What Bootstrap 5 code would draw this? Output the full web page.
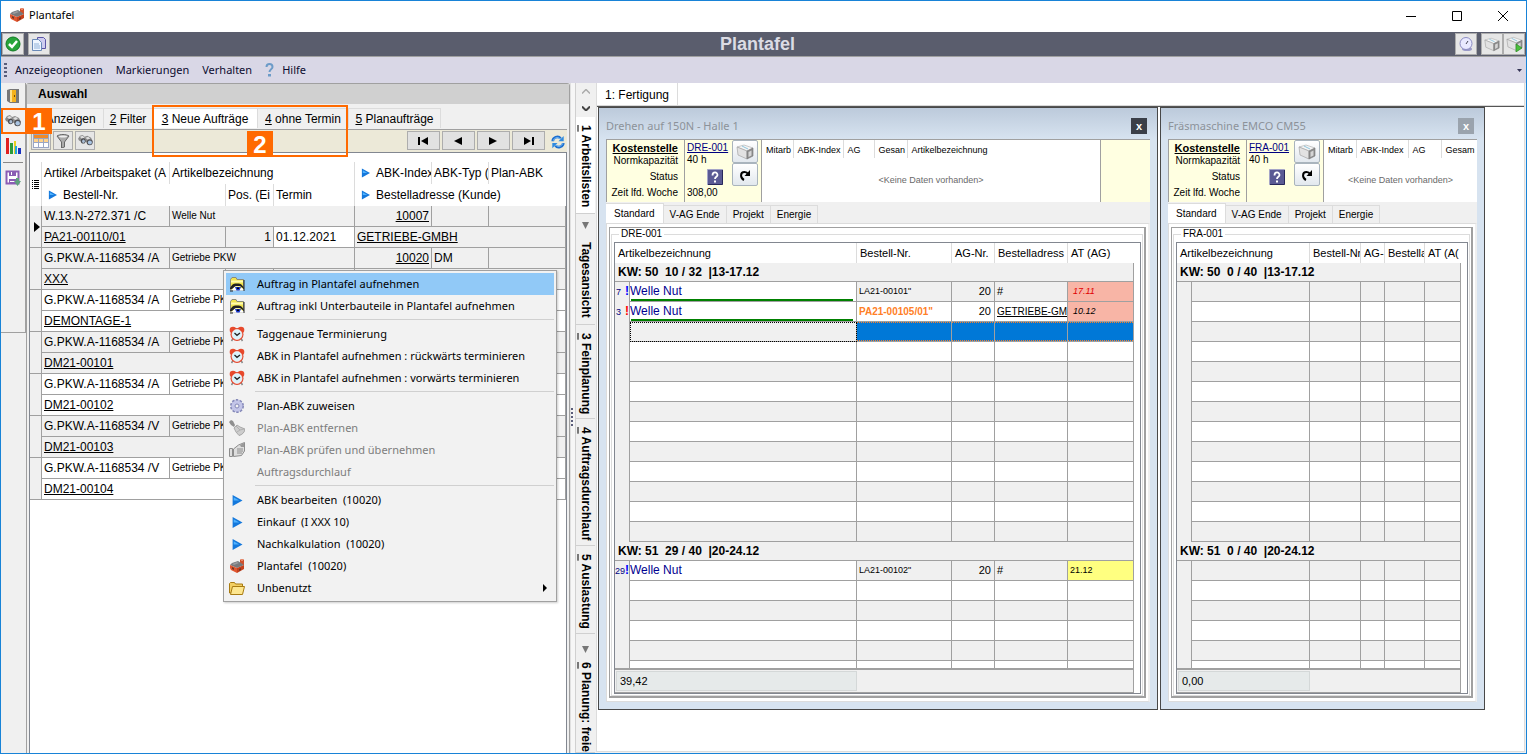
<!DOCTYPE html>
<html lang="de">
<head>
<meta charset="utf-8">
<meta name="viewport" content="width=device-width, initial-scale=1">
<title>Plantafel</title>
<link rel="stylesheet" href="https://cdn.jsdelivr.net/npm/bootstrap@5.3.0/dist/css/bootstrap.min.css">
<style>
:root{--ui:"Noto Sans","Segoe UI",sans-serif;--grid:"Liberation Sans",Arial,sans-serif;--line:#a0a0a0;--face:#f0f0f0;--mark:#ff6a00}
body{font:12px/16px var(--grid);color:#000;background:#fff}
button{font:inherit;color:inherit;padding:0;border:0;background:none}
a{color:inherit}
svg{display:block;flex:none}
.ui{font-family:var(--ui);font-size:11px}
.app{height:100vh;border:1px solid #1883d7;overflow:hidden;position:relative}
.titlebar,.banner,.menubar{flex:none}
.titlebar{height:31px;padding-left:8px}
.titlebar button{width:46px;height:29px;display:grid;place-items:center}
.banner{height:25px;background:#5a5d6d;border-bottom:1px solid var(--line);padding:0 1px}
.banner h1{font-size:18px;line-height:24px;font-weight:bold;color:#dcdce4;padding-left:10px}
.tool{width:22px;height:22px;background:#e6e6e6;border:1px solid #adadad;display:grid;place-items:center}
.menubar{height:26px;background:#d9d7e6;color:#0c0c30;padding-left:3px}
.menubar a{text-decoration:none;margin-left:13px}
.grip{width:3px;height:14px;background:repeating-linear-gradient(#5a5d7a 0 2px,transparent 2px 4px)}
.work{min-height:0;background:var(--face)}
.rail{width:25px;height:250px;border:solid var(--line);border-width:0 1px 1px 0}
.rail button{height:25px;width:24px;display:grid;place-items:center}
.rail hr{margin:4px 2px 2px;border-top:1px solid #888;opacity:1}
.selection{width:544px;flex:none;border:solid var(--line);border-width:1px 1px 0 1px;border-radius:3px 3px 0 0;position:relative;padding:0 2px}
.selection h2{font-size:12px;line-height:20px;font-weight:bold;background:#d0d0d0;margin:0 -2px 4px;padding-left:11px}
.seltabs{height:21px}
.seltabs button{height:20px;border:1px solid #dcdcdc;border-width:1px 1px 0 0;white-space:nowrap;text-align:center}
.seltabs .on{background:#fff}
.seltools{height:23px;background:#ece9d8;border-top:1px solid #a0a0a0;padding:1px 2px 0 2px;gap:2px}
.seltools .tool{width:20px;height:19px}
.seltools .nav-b{width:33px;background:#e1e1e1}
.listbox{background:#fff;border:solid #828790;border-width:1px 1px 0 1px;padding-top:9px;min-height:0}
.list{width:536px;table-layout:fixed;border-collapse:separate;border-spacing:0}
.list th,.list td{height:21px;line-height:18px;padding:0 2px;border:solid var(--line);border-width:0 1px 1px 0;white-space:nowrap;overflow:hidden;font-weight:normal}
.list th{height:22px;border-color:#dcdcdc;border-bottom:0}
.list th:last-child{border-right:0}
.list .g,.list th.g{background:var(--face);padding:0}
.list th.g{background:#fff}
.list tr.alt td{background:var(--face)}
.list tr.alt td.w{background:#fff}
.list .sm{font-size:10px}
.list th svg{display:inline-block;margin:0 6px 0 4px;vertical-align:-1px}
.num{text-align:right}
.split{width:5px;border-left:1px solid #e0e0e0;background:#f6f6f6;display:flex;align-items:center}
.vtabs{width:20px;border-left:1px solid #d0d0d0;overflow:hidden;margin-right:1px}
.vtabs button{writing-mode:vertical-rl;font-weight:bold;width:19px;flex:none;border-bottom:1px solid #d0d0d0;padding:8px 0 4px;white-space:nowrap;display:flex;align-items:center;justify-content:flex-start;gap:13px;line-height:18px}
.vtabs button:last-child{gap:9px;padding-bottom:0}
.vtabs button.roomy{padding-bottom:6px}
.vtabs button.on{background:#fff;padding-bottom:6px}
.vtabs button.step{padding:0;border:0;justify-content:center;height:17px}
.desk{min-width:0;background:#fff;border:solid #dcdcdc;border-width:0 1px 1px 1px;margin:0 1px 1px 0}
.desktabs{height:23px;border-bottom:1px solid #d8d8d8}
.desktabs button{padding:2px 8px 0;border-right:1px solid #dcdcdc}
.mdi{border-top:1px solid #555;padding:0 0 0 1px;gap:2px}
.win{border:1px solid #484848;background:linear-gradient(#bccadb,#d7e3f0 31px);padding:0 7px 7px;flex:none;font-size:11px}
.win-a{width:560px}.win-b{width:325px}
.win header{height:31px;font-family:var(--ui);color:#8c9299;padding-top:5px;margin-right:3px}
.win header button{width:16px;height:16px;color:#fff;background:#9aa3ad;font:bold 11px/14px var(--grid)}
.win-a header button{background:#3b3f48}
.info{height:63px;background:#ffffe1;border-top:1px solid var(--line);overflow:hidden}
.facts,.vals,.btns{flex:none;white-space:nowrap}
.facts{width:79px;font-size:10px;line-height:12px;padding:2px 6px 0 0;text-align:right;border-right:1px solid var(--line);border-left:1px solid var(--line)}
.facts b{font-size:11px}
.vals{width:47px;font-size:10px;line-height:12px;padding:2px 0 0 2px}
.vals svg{margin:3px 9px 2px auto}
.vals a{color:#000080}
.btns{width:29px}
.btns button{width:26px;height:23px;border:1px solid #a9b4bd;border-radius:2px;background:linear-gradient(#fff,#e2e8ee);display:grid;place-items:center}
.mini{background:#fff;border:solid var(--line);border-width:0 1px;font-size:9px;overflow:hidden}
.mini-a{width:340px}
.mini table{table-layout:fixed;width:100%}
.mini th{font-weight:normal;height:18px;padding:2px 0 0 4px;border-right:1px solid #dcdcdc;white-space:nowrap;overflow:hidden}
.mini th:last-child{border:0}
.mini td{text-align:center;color:#6a6a6a;padding-top:14px}
.wtabs{background:var(--face);height:21px;font-size:10px}
.wtabs button{height:18px;border:solid #dcdcdc;border-width:1px 1px 0 0;padding:0 6px;line-height:15px}
.wtabs .on{height:20px;background:#fff;padding:0 8px}
.page{background:#fff;border:1px solid #dcdcdc;border-right:2px solid #efefef;padding:3px 2px}
.box3d{border:1px solid var(--line);border-right-width:2px;border-bottom-width:2px;padding:0 1px}
.box3d fieldset{border:1px solid #dcdcdc;padding:3px 1px 1px 2px;margin:0;min-width:0}
.box3d legend{float:none;width:auto;font-size:10px;line-height:12px;margin:2px 0 -1px 5px;padding:0 2px}
.gridbox{border:1px solid #828790;padding-right:6px;background:#fff}
.plan{width:100%;table-layout:fixed;border-collapse:separate;border-spacing:0}
.plan th,.plan td{height:20px;line-height:17px;padding:0 3px 0 2px;border:solid var(--line);border-width:0 1px 1px 0;white-space:nowrap;overflow:hidden;font-weight:normal}
.plan thead th{border-color:#dcdcdc;border-bottom:0;padding:0 0 0 3px}
.plan thead th:last-child{border-right:0}
.plan .wk td{height:19px;font-weight:bold;font-size:12px;padding-left:3px;white-space:pre;background:var(--face)}
.plan td.g{border-bottom:0;background:var(--face);padding:0 0 0 1px;font-size:9px;color:#000080}
.plan tr.alt td{background:var(--face)}
.plan td.name,.plan tr.alt td.name{background:#fff;color:#000090;font-size:12px;padding-left:0}
.plan td.bar{background:linear-gradient(green,green) 1px 100%/222px 2px no-repeat #fff!important}
.plan .t9{font-size:9px}
.plan .late{background:#f8b5a6!important;font-size:9px;font-style:italic;padding-left:5px}
.plan .red{color:#e00000}
.plan .hit{color:#ff7f27;font-size:10px}
.plan .firm{font-size:10px;padding-right:0}
.plan .soon{background:#ffff80!important;font-size:9px}
.plan tr.sel td{background:repeating-linear-gradient(90deg,#ff7f27 0 1px,transparent 1px 2px) 0 0/100% 1px no-repeat,repeating-linear-gradient(90deg,#ff7f27 0 1px,transparent 1px 2px) 0 100%/100% 1px no-repeat #0078d7}
.plan tr.sel td.g{border-bottom:0;background:var(--face)}
.plan tr.sel td.first{background:var(--face);outline:1px dotted #000;outline-offset:-1px}
.plan tr.part td{height:7px;border-bottom:0;line-height:6px}
.plan tfoot td{height:25px;background:var(--face)!important;border-top:2px solid var(--line);padding:1px 0 1px 1px}
.sum{display:block;height:20px;line-height:18px;background:#e6eaea;border:1px solid #d4d8d8;padding-left:3px}
.excl{font:bold 12px/14px var(--grid);color:#00f}
.excl-r{color:red}
.ctx{position:absolute;left:222px;top:269px;width:334px;background:#f2f2f2;border:1px solid var(--line);box-shadow:1px 1px 2px #0003;padding:2px;z-index:5}
.ctx button{display:flex;align-items:center;height:22px;width:100%;padding:0 7px 0 3px;text-align:left;white-space:pre}
.ctx button span{margin-left:12px}
.ctx .hot{background:#91c9f7}
.ctx button:disabled{color:#7d7d7d}
.ctx hr{margin:2px 0 3px 29px;border-top:1px solid #d0d0d0;opacity:1}
.callout{position:absolute;border:2px solid var(--mark);z-index:6;pointer-events:none}
.callout b{position:absolute;width:26px;height:26px;background:var(--mark);color:#fff;font:bold 24px/27px var(--grid);text-align:center}
.c-one{left:0;top:107px;width:26px;height:26px}.c-one b{left:23px;top:-2px}
.c-two{left:125px;top:21px;width:196px;height:52px}.c-two b{left:93px;bottom:-2px}
</style>
</head>
<body>
<svg width="0" height="0" class="position-absolute" aria-hidden="true">
<symbol id="factory" viewBox="0 0 16 16"><path d="M11 7V2l1-1h2l1 1v5z" fill="#d0502c"/><path d="M12 1h2v2h-2z" fill="#e88a6a"/><path d="M1 7l2-2 6-2 6 4-7 3z" fill="#77797c"/><path d="M3 6l5-2 2 1-5 2z" fill="#9a9c9e"/><path d="M1 7l7 3v5l-6-3-1-2z" fill="#e0562f"/><path d="M8 10l7-3v4l-7 4z" fill="#c5401c"/><path d="M10 11l2-1v2l-2 1zM3 9l2 1v2l-2-1z" fill="#6b3a2a"/></symbol>
<symbol id="tri" viewBox="0 0 10 10"><path d="M1 0l9 5-9 5z" fill="#1478dc"/><path d="M2 2l5 3H2z" fill="#4fb2ff"/></symbol>
<symbol id="bino" viewBox="0 0 16 14"><path d="M0 5l2-3 3-1 2 2 3-1 4 2 2 4-2 2-5-1-3-1-3 0-2-1z" fill="#8b8b8b"/><path d="M2 3l3-1 2 2-3 1zM8 4l3-1 2 2-3 1z" fill="#dedede"/><ellipse cx="5.500" cy="7.500" rx="2.500" ry="2.800" fill="#4c4c50"/><circle cx="12.500" cy="9" r="3.200" fill="#4c4c50"/><ellipse cx="5.800" cy="7.800" rx="1.500" ry="1.800" fill="#a9bdd4"/><circle cx="12.700" cy="9.200" r="2.200" fill="#a9c4e2"/></symbol>
<symbol id="cube" viewBox="0 0 18 16"><path d="M1 3l7-2 9 3-6 3z" fill="#f4f4f4" stroke="#aaa" stroke-width=".6"/><path d="M1 3l10 4v8L2 11z" fill="#e2e2e2" stroke="#999" stroke-width=".6"/><path d="M11 7l6-3v8l-6 3z" fill="#8d8d8d" stroke="#777" stroke-width=".6"/><path d="M12.500 8l3-1.500v5l-3 1.500z" fill="#d5d5d5"/><path d="M6 2l6 3" stroke="#8cc4dc"/></symbol>
<symbol id="clock" viewBox="0 0 16 16"><path d="M4 12.500l-1.500 2.500M12 12.500l1.500 2.500" stroke="#888" stroke-width="1.500"/><circle cx="4" cy="4" r="3.300" fill="#e84a2c"/><circle cx="12" cy="4" r="3.300" fill="#e84a2c"/><circle cx="8" cy="8.500" r="6.500" fill="#e0442a"/><circle cx="8" cy="8.500" r="5" fill="#d9f2fb" stroke="#fff" stroke-width=".6"/><path d="M5.500 7L8 9.300 11 7" fill="none" stroke="#222" stroke-width="1.300"/></symbol>
<symbol id="see" viewBox="0 0 16 16"><path d="M1.500 14V3.500L3 1.500h4l1 2h6.500V14z" fill="#f1e44e" stroke="#8a8a7a"/><path d="M2 4.500h12v2H2z" fill="#fffbb0"/><path d="M1 12c2-4 4-5 7-4.500C11 7 13 8 15 12v1l-4-3-4 0-4 3H1z" fill="#222"/><path d="M2 14.500l4-4h4l5 3v1z" fill="#fff"/><path d="M6 11h6l-1.500 3.500h-3z" fill="#1735c8"/><path d="M8 11.500h2v1.500H8z" fill="#001"/><path d="M15 4v11M1 15h3" stroke="#222"/></symbol>
<symbol id="gear" viewBox="0 0 16 16"><circle cx="8" cy="8" r="6" fill="#b6b9e0" stroke="#8488b8" stroke-width="2" stroke-dasharray="2.400 1.370"/><circle cx="8" cy="8" r="5.500" fill="#c3c5e8"/><circle cx="8" cy="8" r="2" fill="#f2f2f2" stroke="#8488b8"/></symbol>
<symbol id="brush" viewBox="0 0 16 16"><path d="M0 2l2-2 2 1 2 4-1 2-3-2z" fill="#8f8f8f"/><path d="M5 8l3-3 3 2 5 2c0 3-3 6-6 6.500L7 12z" fill="#cdcdcd" stroke="#9a9a9a" stroke-width=".8"/><path d="M7 6l4 4 4-1M8 12l3-2" fill="none" stroke="#aaa" stroke-width=".8"/></symbol>
<symbol id="hand" viewBox="0 0 16 16"><path d="M.5 6.500h3v8h-3zM4.500 7l5-4 6-2.500V9l-3 4.500-8 1z" fill="#ddd" stroke="#8c8c8c"/><path d="M8 7h6M8 9h6M8 11h5" stroke="#8c8c8c"/><path d="M11 3l4-2v4h-3z" fill="#999"/></symbol>
<symbol id="folder" viewBox="0 0 16 16"><path d="M.5 13V3.500l1-1h4l1 1.500h7v9z" fill="#f3cf63" stroke="#a87b12"/><path d="M1.500 14.500l2-8h12l-2 8z" fill="#fde68f" stroke="#a87b12"/></symbol>
<symbol id="help" viewBox="0 0 16 16"><path d="M.5.500h15v15H.5z" fill="#5a5a94" stroke="#a5a5c8"/><path d="M15.500 1v14.500H1" fill="none" stroke="#28285c"/><path d="M5.500 6.500c0-4 5-4 5-.5 0 2-2.500 1.500-2.500 4" fill="none" stroke="#fff" stroke-width="1.800"/><path d="M7 11.500h2v2H7z" fill="#fff"/></symbol>
<symbol id="redo" viewBox="0 0 14 14"><path d="M6 12C2 10 2 4 6.500 4c2 0 3 1 3.500 2" fill="none" stroke="#000" stroke-width="2"/><path d="M12 2v6H6.500z"/></symbol>
</svg>

<div class="app d-flex flex-column">
 <div class="titlebar d-flex ui">
  <svg width="16" height="16" class="align-self-center mb-1"><use href="#factory"/></svg>
  <span class="align-self-center me-auto ps-1 pb-1">Plantafel</span>
  <button aria-label="Minimieren"><svg width="10" height="10"><path d="M0 5.500h10" stroke="#000"/></svg></button>
  <button aria-label="Maximieren"><svg width="10" height="10"><path d="M.5.500h9v9h-9z" fill="none" stroke="#000"/></svg></button>
  <button aria-label="Schließen"><svg width="10" height="10"><path d="M0 0l10 10M10 0L0 10" stroke="#000"/></svg></button>
 </div>
 <div class="banner d-flex align-items-center">
  <button class="tool me-1" aria-label="OK"><svg width="16" height="16"><circle cx="8" cy="8" r="7" fill="#27a43a" stroke="#0f7a22"/><path d="M4 8l3 3 5-6" fill="none" stroke="#fff" stroke-width="2.500"/></svg></button>
  <button class="tool" aria-label="Kopieren"><svg width="16" height="16"><path d="M6.500 1.500h6l2 2v9h-8z" fill="#cfcdf0" stroke="#5b55a5"/><path d="M1.500 3.500h6l3 3v8h-9z" fill="#eef5ff" stroke="#6a8ab8"/><path d="M3 8h5M3 10h6M3 12h6" stroke="#8fb0d8"/></svg></button>
  <h1 class="flex-grow-1 text-center m-0">Plantafel</h1>
  <button class="tool me-1" aria-label="Zeit"><svg width="16" height="16"><ellipse cx="9" cy="13" rx="5" ry="2" fill="#9a9ac8"/><circle cx="8" cy="7.500" r="6" fill="#e9e9ff" stroke="#8c8cc4"/><path d="M8 8l2-3" stroke="#445"/></svg></button>
  <button class="tool" aria-label="Paket"><svg width="16" height="15"><use href="#cube"/></svg></button>
  <button class="tool" aria-label="Paket starten"><svg width="17" height="16"><use href="#cube"/><path d="M10 8l6 4-6 4z" fill="#4cc03c" stroke="#2a8a20" stroke-width=".7"/></svg></button>
 </div>
 <nav class="menubar d-flex align-items-center ui">
  <span class="grip"></span>
  <a href="#" class="ms-2">Anzeigeoptionen</a><a href="#">Markierungen</a><a href="#">Verhalten</a>
  <a href="#" class="d-flex align-items-center gap-2"><svg width="9" height="14"><path d="M1.500 4c0-4 6-4 6 0 0 2.500-3 2-3 5" fill="none" stroke="#6c9bc8" stroke-width="2"/><path d="M3 11h3v2.500H3z" fill="#6c9bc8"/></svg>Hilfe</a>
  <svg class="ms-auto me-1" width="5" height="3"><path d="M0 0h5L2.500 3z" fill="#335"/></svg>
 </nav>

 <div class="work d-flex flex-grow-1">
  <div class="rail flex-shrink-0">
   <button aria-label="Beenden"><svg width="14" height="16"><path d="M1 2l3-1h9v14H4l-3-2z" fill="#777"/><path d="M4 2h6v12H4z" fill="#f5b21c"/><path d="M4 2h2v12H4z" fill="#ffe08a"/><path d="M8 7h1v2H8z" fill="#7a4a00"/></svg></button>
   <button aria-label="Suchen"><svg width="16" height="14"><use href="#bino"/></svg></button>
   <button aria-label="Diagramm"><svg width="16" height="16"><path d="M1 0h3v16H1z" fill="#e02020"/><path d="M5 5h3v11H5z" fill="#2a9a3a"/><path d="M9 3h2v13H9z" fill="#e8d020"/><path d="M10 8h2v8h-2z" fill="#20a8d8"/><path d="M13 10h3v6h-3z" fill="#1830c0"/></svg></button>
   <hr>
   <button aria-label="Speichern"><svg width="16" height="16"><path d="M1.500 1.500h12v12h-12z" fill="#fff" stroke="#8a5cb4" stroke-width="2"/><path d="M4 1h7v5H4zM4 9h7v5H4z" fill="#8a5cb4"/><path d="M6 2h1v3H6zM5 11h5v1H5z" fill="#fff"/><path d="M11 8h3v3h2l-3.500 5L9 11h2z" fill="#5fa07e"/></svg></button>
  </div>

  <section class="selection d-flex flex-column">
   <h2>Auswahl</h2>
   <div class="seltabs d-flex" role="tablist">
    <button style="width:75px"><u>1</u> Anzeigen</button><button style="width:49px"><u>2</u> Filter</button><button class="on" style="width:105px"><u>3</u> Neue Aufträge</button><button style="width:91px"><u>4</u> ohne Termin</button><button style="width:92px"><u>5</u> Planaufträge</button>
   </div>
   <div class="seltools d-flex">
    <button class="tool" aria-label="Tabelle"><svg width="16" height="14"><path d="M0 0h16v14H0z" fill="#9aa6c4"/><path d="M1 1h14v3H1z" fill="#f08a28"/><path d="M1 5h4v3H1zM6 5h4v3H6zM11 5h4v3h-4z" fill="#ffd28a"/><path d="M1 9h4v4H1zM6 9h4v4H6zM11 9h4v4h-4z" fill="#fff"/></svg></button>
    <button class="tool" aria-label="Filter"><svg width="14" height="14"><path d="M1 2c3-2 9-2 12 0L8.500 8v5l-3 1V8z" fill="#aaa" stroke="#666"/><ellipse cx="7" cy="2.500" rx="4" ry="1" fill="#eee"/></svg></button>
    <button class="tool me-auto" aria-label="Suchen"><svg width="15" height="13"><use href="#bino"/></svg></button>
    <button class="tool nav-b" aria-label="Erster"><svg width="11" height="8"><path d="M0 0h2v8H0zM10 0v8L3 4z"/></svg></button>
    <button class="tool nav-b" aria-label="Zurück"><svg width="9" height="8"><path d="M8 0v8L0 4z"/></svg></button>
    <button class="tool nav-b" aria-label="Weiter"><svg width="9" height="8"><path d="M0 0v8l8-4z"/></svg></button>
    <button class="tool nav-b" aria-label="Letzter"><svg width="11" height="8"><path d="M9 0h2v8H9zM1 0v8l7-4z"/></svg></button>
    <button class="ps-1" aria-label="Aktualisieren"><svg width="14" height="16" viewBox="0 0 16 16"><path d="M2 7c0-4 6-7 9-3M14 9c0 4-6 7-9 3" fill="none" stroke="#1c6fd0" stroke-width="3"/><path d="M2.500 6.500c1-3 5-5 8-2M13.500 9.500c-1 3-5 5-8 2" fill="none" stroke="#8cc8f8"/><path d="M14.500 1v6H8.500zM1.500 15V9h6z" fill="#2f8be0"/></svg></button>
   </div>
   <div class="listbox flex-grow-1 overflow-hidden">
    <table class="list">
     <colgroup><col style="width:12px"><col style="width:128px"><col style="width:56px"><col style="width:48px"><col style="width:81px"><col style="width:77px"><col style="width:57px"><col></colgroup>
     <thead>
      <tr><th class="g" rowspan="2"><svg width="7" height="9" style="margin:0 2px"><path d="M0 .5h1M2 .5h5M0 2.500h1M2 2.500h5M0 4.500h1M2 4.500h5M0 6.500h1M2 6.500h5M0 8.500h1M2 8.500h5" stroke="#000"/></svg></th><th>Artikel /Arbeitspaket (A</th><th colspan="3">Artikelbezeichnung</th><th><svg width="9" height="10"><use href="#tri"/></svg>ABK-Index</th><th>ABK-Typ (</th><th>Plan-ABK</th></tr>
      <tr><th colspan="2"><svg width="9" height="10"><use href="#tri"/></svg>Bestell-Nr.</th><th>Pos. (Ei</th><th>Termin</th><th colspan="3"><svg width="9" height="10"><use href="#tri"/></svg>Bestelladresse (Kunde)</th></tr>
     </thead>
     <tbody>
      <tr class="alt"><td class="g" rowspan="2"><svg width="6" height="10" style="margin-left:4px"><path d="M0 0l6 5-6 5z"/></svg></td><td>W.13.N-272.371 /C</td><td colspan="3" class="sm">Welle Nut</td><td class="num"><a href="#">10007</a></td><td></td><td></td></tr>
      <tr class="alt"><td colspan="2"><a href="#">PA21-00110/01</a></td><td class="num">1</td><td class="w">01.12.2021</td><td colspan="3"><a href="#">GETRIEBE-GMBH</a></td></tr>
      <tr class="alt"><td class="g" rowspan="2"></td><td>G.PKW.A-1168534 /A</td><td colspan="3" class="sm">Getriebe PKW</td><td class="num"><a href="#">10020</a></td><td>DM</td><td></td></tr>
      <tr class="alt"><td colspan="2"><a href="#">XXX</a></td><td></td><td></td><td colspan="3"></td></tr>
      <tr><td class="g" rowspan="2"></td><td>G.PKW.A-1168534 /A</td><td colspan="3" class="sm">Getriebe PKW</td><td></td><td></td><td></td></tr>
      <tr><td colspan="2"><a href="#">DEMONTAGE-1</a></td><td></td><td></td><td colspan="3"></td></tr>
      <tr class="alt"><td class="g" rowspan="2"></td><td>G.PKW.A-1168534 /A</td><td colspan="3" class="sm">Getriebe PKW</td><td></td><td></td><td></td></tr>
      <tr class="alt"><td colspan="2"><a href="#">DM21-00101</a></td><td></td><td></td><td colspan="3"></td></tr>
      <tr><td class="g" rowspan="2"></td><td>G.PKW.A-1168534 /A</td><td colspan="3" class="sm">Getriebe PKW</td><td></td><td></td><td></td></tr>
      <tr><td colspan="2"><a href="#">DM21-00102</a></td><td></td><td></td><td colspan="3"></td></tr>
      <tr class="alt"><td class="g" rowspan="2"></td><td>G.PKW.A-1168534 /V</td><td colspan="3" class="sm">Getriebe PKW</td><td></td><td></td><td></td></tr>
      <tr class="alt"><td colspan="2"><a href="#">DM21-00103</a></td><td></td><td></td><td colspan="3"></td></tr>
      <tr><td class="g" rowspan="2"></td><td>G.PKW.A-1168534 /V</td><td colspan="3" class="sm">Getriebe PKW</td><td></td><td></td><td></td></tr>
      <tr><td colspan="2"><a href="#">DM21-00104</a></td><td></td><td></td><td colspan="3"></td></tr>
     </tbody>
    </table>
   </div>
   <div class="callout c-two"><b>2</b></div>
  </section>

  <div class="split flex-shrink-0"><span class="grip" style="width:2px;height:20px"></span></div>
  <div class="vtabs d-flex flex-column flex-shrink-0">
   <button class="step" aria-label="Hoch"><svg width="8" height="5"><path d="M0 4.500l4-4 4 4" fill="none" stroke="#aaa" stroke-width="1.500"/></svg></button>
   <button class="step" aria-label="Runter"><svg width="8" height="5"><path d="M0 .5l4 4 4-4" fill="none" stroke="#444" stroke-width="2"/></svg></button>
   <button class="on"><span><u>1</u> Arbeitslisten</span></button>
   <button class="roomy"><svg width="7" height="7"><path d="M0 0h7L3.500 7z" fill="#777"/></svg><span>Tagesansicht</span></button>
   <button><span><u>3</u> Feinplanung</span></button>
   <button><span><u>4</u> Auftragsdurchlauf</span></button>
   <button><span><u>5</u> Auslastung</span></button>
   <button><svg width="7" height="7" class="mt-1"><path d="M0 0h7L3.500 7z" fill="#777"/></svg><span><u>6</u> Planung: freie</span></button>
  </div>

  <main class="desk flex-grow-1 overflow-hidden">
   <div class="desktabs d-flex"><button>1: Fertigung</button></div>
   <div class="mdi d-flex align-items-start">
    <section class="win win-a">
     <header class="d-flex align-items-center justify-content-between"><span>Drehen auf 150N - Halle 1</span><button aria-label="Schließen">x</button></header>
     <div class="info d-flex">
      <div class="facts"><b><u>Kostenstelle</u></b><br>Normkapazität<div class="py-1">Status</div>Zeit lfd. Woche</div>
      <div class="vals"><a href="#">DRE-001</a><br>40 h<svg width="16" height="16"><use href="#help"/></svg>308,00</div>
      <div class="btns"><button aria-label="Paket"><svg width="18" height="16"><use href="#cube"/></svg></button><button aria-label="Neu laden"><svg width="14" height="14"><use href="#redo"/></svg></button></div>
      <div class="mini mini-a"><table><colgroup><col style="width:31px"><col style="width:50px"><col style="width:31px"><col style="width:33px"><col></colgroup><tr><th>Mitarb</th><th>ABK-Index</th><th>AG</th><th>Gesan</th><th>Artikelbezeichnung</th></tr><tr><td colspan="5">&lt;Keine Daten vorhanden&gt;</td></tr></table></div>
     </div>
     <div class="wtabs d-flex align-items-end"><button class="on">Standard</button><button>V-AG Ende</button><button>Projekt</button><button>Energie</button></div>
     <div class="page"><div class="box3d"><fieldset><legend>DRE-001</legend><div class="gridbox">
      <table class="plan">
       <colgroup><col style="width:15px"><col><col style="width:95px"><col style="width:43px"><col style="width:73px"><col style="width:66px"></colgroup>
       <thead><tr><th colspan="2">Artikelbezeichnung</th><th>Bestell-Nr.</th><th>AG-Nr.</th><th>Bestelladress</th><th>AT (AG)</th></tr></thead>
       <tbody data-fill="10" data-start="1">
        <tr class="wk"><td colspan="6">KW: 50  10 / 32  |13-17.12</td></tr>
        <tr class="alt"><td class="g">7 <b class="excl float-end">!</b></td><td class="name bar">Welle Nut</td><td class="t9">LA21-00101"</td><td class="num">20</td><td>#</td><td class="late red">17.11</td></tr>
        <tr><td class="g">3 <b class="excl excl-r float-end">!</b></td><td class="name bar">Welle Nut</td><td class="hit"><b>PA21-00105/01"</b></td><td class="num">20</td><td class="firm"><a href="#">GETRIEBE-GM</a></td><td class="late">10.12</td></tr>
        <tr class="sel"><td class="g"></td><td class="first"></td><td></td><td></td><td></td><td></td></tr>
       </tbody>
       <tbody data-fill="4" data-start="1" data-part>
        <tr class="wk"><td colspan="6">KW: 51  29 / 40  |20-24.12</td></tr>
        <tr class="alt"><td class="g ps-0">29<b class="excl float-end">!</b></td><td class="name">Welle Nut</td><td class="t9">LA21-00102"</td><td class="num">20</td><td>#</td><td class="soon">21.12</td></tr>
       </tbody>
       <tfoot><tr><td colspan="2" class="border-end-0"><span class="sum">39,42</span></td><td colspan="4"></td></tr></tfoot>
      </table></div></fieldset></div></div>
    </section>

    <section class="win win-b">
     <header class="d-flex align-items-center justify-content-between"><span>Fräsmaschine EMCO CM55</span><button aria-label="Schließen">x</button></header>
     <div class="info d-flex">
      <div class="facts"><b><u>Kostenstelle</u></b><br>Normkapazität<div class="py-1">Status</div>Zeit lfd. Woche</div>
      <div class="vals"><a href="#">FRA-001</a><br>40 h<svg width="16" height="16"><use href="#help"/></svg></div>
      <div class="btns"><button aria-label="Paket"><svg width="18" height="16"><use href="#cube"/></svg></button><button aria-label="Neu laden"><svg width="14" height="14"><use href="#redo"/></svg></button></div>
      <div class="mini flex-grow-1 border-end-0"><table><colgroup><col style="width:32px"><col style="width:52px"><col style="width:33px"><col></colgroup><tr><th>Mitarb</th><th>ABK-Index</th><th>AG</th><th>Gesam</th></tr><tr><td colspan="4">&lt;Keine Daten vorhanden&gt;</td></tr></table></div>
     </div>
     <div class="wtabs d-flex align-items-end"><button class="on">Standard</button><button>V-AG Ende</button><button>Projekt</button><button>Energie</button></div>
     <div class="page"><div class="box3d"><fieldset><legend>FRA-001</legend><div class="gridbox">
      <table class="plan">
       <colgroup><col style="width:15px"><col><col style="width:51px"><col style="width:24px"><col style="width:40px"><col style="width:36px"></colgroup>
       <thead><tr><th colspan="2">Artikelbezeichnung</th><th>Bestell-Nr</th><th>AG-</th><th>Bestella</th><th>AT (A(</th></tr></thead>
       <tbody data-fill="13" data-start="0"><tr class="wk"><td colspan="6">KW: 50  0 / 40  |13-17.12</td></tr></tbody>
       <tbody data-fill="5" data-start="0" data-part><tr class="wk"><td colspan="6">KW: 51  0 / 40  |20-24.12</td></tr></tbody>
       <tfoot><tr><td colspan="2" class="border-end-0"><span class="sum">0,00</span></td><td colspan="4"></td></tr></tfoot>
      </table></div></fieldset></div></div>
    </section>
   </div>
  </main>
  </div>

 <div class="callout c-one"><b>1</b></div>

 <div class="ctx ui" role="menu">
  <button class="hot"><svg width="16" height="16"><use href="#see"/></svg><span>Auftrag in Plantafel aufnehmen</span></button>
  <button><svg width="16" height="16"><use href="#see"/></svg><span>Auftrag inkl Unterbauteile in Plantafel aufnehmen</span></button>
  <hr>
  <button><svg width="16" height="16"><use href="#clock"/></svg><span>Taggenaue Terminierung</span></button>
  <button><svg width="16" height="16"><use href="#clock"/></svg><span>ABK in Plantafel aufnehmen : rückwärts terminieren</span></button>
  <button><svg width="16" height="16"><use href="#clock"/></svg><span>ABK in Plantafel aufnehmen : vorwärts terminieren</span></button>
  <hr>
  <button><svg width="16" height="16"><use href="#gear"/></svg><span>Plan-ABK zuweisen</span></button>
  <button disabled><svg width="16" height="16"><use href="#brush"/></svg><span>Plan-ABK entfernen</span></button>
  <button disabled><svg width="16" height="16"><use href="#hand"/></svg><span>Plan-ABK prüfen und übernehmen</span></button>
  <button disabled><svg width="16" height="16"></svg><span>Auftragsdurchlauf</span></button>
  <hr>
  <button><svg width="16" height="11"><use href="#tri"/></svg><span>ABK bearbeiten  (10020)</span></button>
  <button><svg width="16" height="11"><use href="#tri"/></svg><span>Einkauf  (I XXX 10)</span></button>
  <button><svg width="16" height="11"><use href="#tri"/></svg><span>Nachkalkulation  (10020)</span></button>
  <button><svg width="16" height="16"><use href="#factory"/></svg><span>Plantafel  (10020)</span></button>
  <button><svg width="16" height="16"><use href="#folder"/></svg><span>Unbenutzt</span><svg class="ms-auto" width="4" height="8"><path d="M0 0l4 4-4 4z"/></svg></button>
 </div>
</div>
<script src="https://cdn.jsdelivr.net/npm/bootstrap@5.3.0/dist/js/bootstrap.bundle.min.js"></script>
<script>
// pad every week with its free slots
document.querySelectorAll('tbody[data-fill]').forEach(body => {
  const n = +body.dataset.fill, start = +body.dataset.start;
  const cells = '<td class="g"></td>' + '<td></td>'.repeat(5);
  for (let i = 0; i < n; i++) body.insertAdjacentHTML('beforeend', `<tr class="${(i + start) % 2 ? '' : 'alt'}">${cells}</tr>`);
  if ('part' in body.dataset) body.insertAdjacentHTML('beforeend', `<tr class="part">${cells}</tr>`);
});
</script>
</body>
</html>
